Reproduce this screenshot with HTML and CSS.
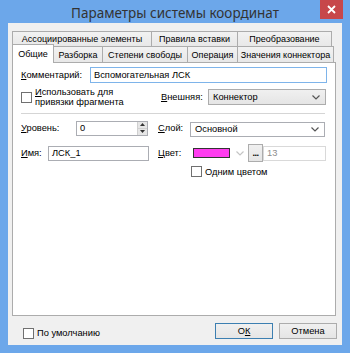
FILE: index.html
```html
<!DOCTYPE html>
<html lang="ru">
<head>
<meta charset="utf-8">
<title>Параметры системы координат</title>
<link rel="stylesheet" href="styles.css">
</head>
<body>
<div class="window">
  <div class="titlebar">
    <div class="title">Параметры системы координат</div>
    <div class="close"><svg width="9" height="9" viewBox="0 0 9 9"><path d="M1 1L8 8M8 1L1 8" stroke="#fff" stroke-width="1.8"/></svg></div>
  </div>
  <div class="client">
    <div class="tabs">
      <div class="tabrow">
        <div class="tab w-assoc">Ассоциированные элементы</div>
        <div class="tab w-rules">Правила вставки</div>
        <div class="tab w-trans">Преобразование</div>
      </div>
      <div class="tabrow">
        <div class="tab sel w-gen">Общие</div>
        <div class="tab w-razb">Разборка</div>
        <div class="tab w-step">Степени свободы</div>
        <div class="tab w-oper">Операция</div>
        <div class="tab w-conn">Значения коннектора</div>
      </div>
    </div>
    <div class="panel">
      <div class="row row-comment">
        <span class="lbl w-lcomment"><u>К</u>омментарий:</span>
        <div class="edit focus w-comment">Вспомогательная ЛСК</div>
      </div>
      <div class="row row-use">
        <div class="chk-wrap w-use">
          <span class="box"></span>
          <span class="two-line"><u>И</u>спользовать для<br>привязки фрагмента</span>
        </div>
        <span class="lbl w-lext"><u>В</u>нешняя:</span>
        <div class="combo grey w-ext"><span class="ctext">Коннектор</span><svg class="chev" width="8" height="5" viewBox="0 0 8 5"><path d="M0.5 0.5L4 4L7.5 0.5" fill="none" stroke="#555" stroke-width="1.2"/></svg></div>
      </div>
      <div class="sep"></div>
      <div class="row row-level">
        <span class="lbl w-llevel"><u>У</u>ровень:</span>
        <div class="edit spin w-level"><span class="stext">0</span>
          <div class="spinbtns">
            <div class="sb"><svg width="5" height="3" viewBox="0 0 5 3"><path d="M0 3L2.5 0L5 3Z" fill="#333"/></svg></div>
            <div class="sb"><svg width="5" height="3" viewBox="0 0 5 3"><path d="M0 0L2.5 3L5 0Z" fill="#333"/></svg></div>
          </div>
        </div>
        <span class="lbl w-llayer"><u>С</u>лой:</span>
        <div class="combo w-layer"><span class="ctext">Основной</span><svg class="chev" width="8" height="5" viewBox="0 0 8 5"><path d="M0.5 0.5L4 4L7.5 0.5" fill="none" stroke="#555" stroke-width="1.2"/></svg></div>
      </div>
      <div class="row row-name">
        <span class="lbl w-lname"><u>И</u>мя:</span>
        <div class="edit w-name">ЛСК_1</div>
        <span class="lbl w-lcolor"><u>Ц</u>вет:</span>
        <div class="colorcombo">
          <span class="swatch"></span>
          <svg class="chev" width="8" height="5" viewBox="0 0 8 5"><path d="M0.5 0.5L4 4L7.5 0.5" fill="none" stroke="#c4c4c4" stroke-width="1.2"/></svg>
        </div>
        <div class="btn-dots">...</div>
        <div class="edit disabled w-num">13</div>
      </div>
      <div class="row row-one">
        <span class="box"></span>
        <span class="ctext">Одним цветом</span>
      </div>
    </div>
    <div class="bottom">
      <div class="chk-bottom"><span class="box"></span><span>По умолчанию</span></div>
      <div class="buttons">
        <div class="btn default">О<u>К</u></div>
        <div class="btn">Отмена</div>
      </div>
    </div>
  </div>
</div>
</body>
</html>
```
FILE: styles.css
```css
* { box-sizing: border-box; }
html, body { margin: 0; padding: 0; }
body { width: 350px; height: 353px; overflow: hidden; background: #6ba6e8; }

.window {
  width: 350px; height: 353px;
  background: #6ca7ea;
  display: flex; flex-direction: column;
  font-family: "Liberation Sans", Arial, sans-serif;
  font-size: 9.3px; color: #000;
}

.titlebar {
  height: 23px; flex: none;
  display: flex; align-items: flex-start;
  padding: 0 7px 0 30px;
}
.title {
  flex: 1; text-align: center;
  font-family: "Noto Sans", "Open Sans", sans-serif;
  font-size: 13.5px; color: #333;
  line-height: 27px;
}
.close {
  width: 23px; height: 19px; background: #c7474a;
  display: flex; align-items: center; justify-content: center;
}

.client {
  flex: 1; margin: 0 8px 8px 8px;
  background: #f0f0f0;
  padding: 8px 6px 0 4px;
  display: flex; flex-direction: column;
}

.tabs { display: flex; flex-direction: column; }
.tabrow { display: flex; height: 15px; }
.tabrow + .tabrow { height: 16px; }
.tab {
  border: 1px solid #acacac; border-bottom: none;
  background: linear-gradient(#f2f2f2, #e8e8e8);
  margin-left: -1px;
  display: flex; align-items: center; justify-content: center;
  white-space: nowrap; font-size: 9px; color: #000;
}
.tab:first-child { margin-left: 0; }
.tab.sel {
  background: #fff; height: 19px; margin-top: -2px;
  position: relative; z-index: 2; padding-bottom: 1px;
}
.w-assoc { width: 140px; }
.w-rules { width: 87px; }
.w-trans { width: 95px; }
.w-gen { width: 42px; }
.w-razb { width: 50px; }
.w-step { width: 86px; }
.w-oper { width: 51px; }
.w-conn { width: 97px; }

.panel {
  height: 254px; background: #fff;
  border: 1px solid #acacac;
  padding: 4px 0 0 8px;
  display: flex; flex-direction: column;
}
.row { display: flex; align-items: center; }
.lbl { white-space: nowrap; flex: none; }
u { text-decoration: underline; text-underline-offset: 1px; }

.edit {
  height: 16px; border: 1px solid #abadb3; background: #fff;
  padding: 0 3px; display: flex; align-items: center; flex: none;
  white-space: nowrap;
}
.edit.focus { border-color: #7eb4ea; }
.edit.disabled { border-color: #d9d9d9; color: #8d8d8d; }

.row-comment { height: 16px; }
.w-lcomment { width: 69px; }
.w-comment { width: 237px; }

.row-use { margin-top: 6px; height: 16px; }
.chk-wrap { display: flex; align-items: center; width: 140px; flex: none; }
.two-line { line-height: 10px; margin-left: 3px; white-space: nowrap; }
.box {
  width: 11px; height: 11px; border: 1px solid #707070; background: #fff; flex: none;
}
.w-lext { width: 47px; }
.combo {
  height: 16px; border: 1px solid #abadb3; background: #fff;
  display: flex; align-items: center; justify-content: space-between;
  padding: 0 5px 0 4px; flex: none;
}
.combo.grey { background: linear-gradient(#f0f0f0, #e5e5e5); border-color: #acacac; }
.w-ext { width: 118px; }

.sep { height: 1px; background: #d5d5d5; margin: 8px 10px 0 0; }

.row-level { margin-top: 6px; height: 16px; }
.w-llevel { width: 55px; }
.w-level { width: 72px; height: 15px; padding: 0 0 0 3px; justify-content: space-between; }
.spinbtns { display: flex; flex-direction: column; width: 10px; height: 13px; }
.sb {
  flex: 1; background: #e6e6e6; border-left: 1px solid #d0d0d0;
  display: flex; align-items: center; justify-content: center;
}
.sb + .sb { border-top: 1px solid #d0d0d0; }
.w-llayer { width: 32px; margin-left: 10px; }
.w-layer { width: 135px; height: 15px; margin-top: 2px; }

.row-name { margin-top: 8px; height: 18px; }
.w-lname { width: 27px; }
.w-name { width: 101px; height: 15px; }
.w-lcolor { width: 32px; margin-left: 9px; }
.colorcombo {
  width: 56px; height: 15px; display: flex; align-items: center; flex: none;
  padding-left: 3px;
}
.swatch { width: 37px; height: 10px; background: #ff3cf0; border: 1px solid #333; }
.colorcombo .chev { margin-left: 6px; }
.btn-dots {
  width: 15px; height: 18px; margin-left: 2px; flex: none;
  border: 1px solid #acacac; background: linear-gradient(#f0f0f0, #e5e5e5);
  display: flex; align-items: center; justify-content: center; font-weight: bold; letter-spacing: -0.5px;
}
.w-num { width: 63px; height: 15px; }

.row-one { margin-top: 4px; padding-left: 170px; height: 11px; }
.row-one .ctext { margin-left: 3px; }

.bottom {
  display: flex; align-items: center; justify-content: space-between;
  margin-top: 7px; height: 16px; margin-right: -1px;
}
.chk-bottom { display: flex; align-items: center; margin-left: 11px; margin-top: 4px; }
.chk-bottom span + span { margin-left: 3px; }
.buttons { display: flex; gap: 6px; }
.btn {
  width: 58px; height: 16px;
  border: 1px solid #acacac; background: linear-gradient(#f0f0f0, #e5e5e5);
  display: flex; align-items: center; justify-content: center;
}
.btn.default { border-color: #3c7fb1; }
```
